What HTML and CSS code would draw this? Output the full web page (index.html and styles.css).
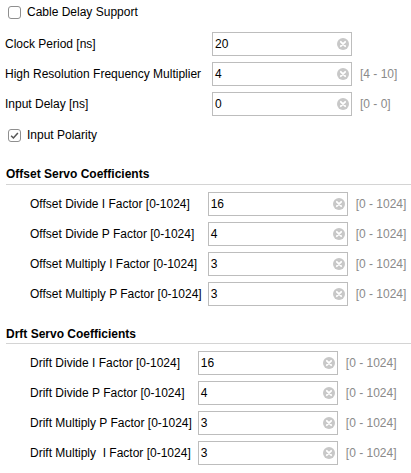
FILE: index.html
```html
<!DOCTYPE html>
<html>
<head>
<meta charset="utf-8">
<link rel="stylesheet" href="styles.css">
</head>
<body>
<div class="page">
  <label class="check check-top"><span class="box"></span><span>Cable Delay Support</span></label>

  <div class="grid grid-main">
    <span class="lbl">Clock Period [ns]</span>
    <span class="field"><span class="val">20</span><span class="clear"><svg viewBox="0 0 12 12" width="12" height="12"><circle cx="6" cy="6" r="6" fill="#c8c8c8"/><path d="M3.8 3.8 L8.2 8.2 M8.2 3.8 L3.8 8.2" stroke="#fff" stroke-width="1.8" stroke-linecap="round"/></svg></span></span>
    <span class="range"></span>

    <span class="lbl">High Resolution Frequency Multiplier</span>
    <span class="field"><span class="val">4</span><span class="clear"><svg viewBox="0 0 12 12" width="12" height="12"><circle cx="6" cy="6" r="6" fill="#c8c8c8"/><path d="M3.8 3.8 L8.2 8.2 M8.2 3.8 L3.8 8.2" stroke="#fff" stroke-width="1.8" stroke-linecap="round"/></svg></span></span>
    <span class="range">[4 - 10]</span>

    <span class="lbl">Input Delay [ns]</span>
    <span class="field"><span class="val">0</span><span class="clear"><svg viewBox="0 0 12 12" width="12" height="12"><circle cx="6" cy="6" r="6" fill="#c8c8c8"/><path d="M3.8 3.8 L8.2 8.2 M8.2 3.8 L3.8 8.2" stroke="#fff" stroke-width="1.8" stroke-linecap="round"/></svg></span></span>
    <span class="range">[0 - 0]</span>
  </div>

  <label class="check check-pol"><span class="box checked"><svg viewBox="0 0 13 13" width="11" height="11"><path d="M2.5 6.8 L5.2 9.4 L10.5 3.5" fill="none" stroke="#555" stroke-width="1.8"/></svg></span><span>Input Polarity</span></label>

  <h3 class="section-title first">Offset Servo Coefficients</h3>
  <div class="grid grid-sub">
    <span class="lbl">Offset Divide I Factor [0-1024]</span>
    <span class="field"><span class="val">16</span><span class="clear"><svg viewBox="0 0 12 12" width="12" height="12"><circle cx="6" cy="6" r="6" fill="#c8c8c8"/><path d="M3.8 3.8 L8.2 8.2 M8.2 3.8 L3.8 8.2" stroke="#fff" stroke-width="1.8" stroke-linecap="round"/></svg></span></span>
    <span class="range">[0 - 1024]</span>

    <span class="lbl">Offset Divide P Factor [0-1024]</span>
    <span class="field"><span class="val">4</span><span class="clear"><svg viewBox="0 0 12 12" width="12" height="12"><circle cx="6" cy="6" r="6" fill="#c8c8c8"/><path d="M3.8 3.8 L8.2 8.2 M8.2 3.8 L3.8 8.2" stroke="#fff" stroke-width="1.8" stroke-linecap="round"/></svg></span></span>
    <span class="range">[0 - 1024]</span>

    <span class="lbl">Offset Multiply I Factor [0-1024]</span>
    <span class="field"><span class="val">3</span><span class="clear"><svg viewBox="0 0 12 12" width="12" height="12"><circle cx="6" cy="6" r="6" fill="#c8c8c8"/><path d="M3.8 3.8 L8.2 8.2 M8.2 3.8 L3.8 8.2" stroke="#fff" stroke-width="1.8" stroke-linecap="round"/></svg></span></span>
    <span class="range">[0 - 1024]</span>

    <span class="lbl">Offset Multiply P Factor [0-1024]</span>
    <span class="field"><span class="val">3</span><span class="clear"><svg viewBox="0 0 12 12" width="12" height="12"><circle cx="6" cy="6" r="6" fill="#c8c8c8"/><path d="M3.8 3.8 L8.2 8.2 M8.2 3.8 L3.8 8.2" stroke="#fff" stroke-width="1.8" stroke-linecap="round"/></svg></span></span>
    <span class="range">[0 - 1024]</span>
  </div>

  <h3 class="section-title second">Drft Servo Coefficients</h3>
  <div class="grid grid-sub">
    <span class="lbl">Drift Divide I Factor [0-1024]</span>
    <span class="field"><span class="val">16</span><span class="clear"><svg viewBox="0 0 12 12" width="12" height="12"><circle cx="6" cy="6" r="6" fill="#c8c8c8"/><path d="M3.8 3.8 L8.2 8.2 M8.2 3.8 L3.8 8.2" stroke="#fff" stroke-width="1.8" stroke-linecap="round"/></svg></span></span>
    <span class="range">[0 - 1024]</span>

    <span class="lbl">Drift Divide P Factor [0-1024]</span>
    <span class="field"><span class="val">4</span><span class="clear"><svg viewBox="0 0 12 12" width="12" height="12"><circle cx="6" cy="6" r="6" fill="#c8c8c8"/><path d="M3.8 3.8 L8.2 8.2 M8.2 3.8 L3.8 8.2" stroke="#fff" stroke-width="1.8" stroke-linecap="round"/></svg></span></span>
    <span class="range">[0 - 1024]</span>

    <span class="lbl">Drift Multiply P Factor [0-1024]</span>
    <span class="field"><span class="val">3</span><span class="clear"><svg viewBox="0 0 12 12" width="12" height="12"><circle cx="6" cy="6" r="6" fill="#c8c8c8"/><path d="M3.8 3.8 L8.2 8.2 M8.2 3.8 L3.8 8.2" stroke="#fff" stroke-width="1.8" stroke-linecap="round"/></svg></span></span>
    <span class="range">[0 - 1024]</span>

    <span class="lbl">Drift Multiply &nbsp;I Factor [0-1024]</span>
    <span class="field"><span class="val">3</span><span class="clear"><svg viewBox="0 0 12 12" width="12" height="12"><circle cx="6" cy="6" r="6" fill="#c8c8c8"/><path d="M3.8 3.8 L8.2 8.2 M8.2 3.8 L3.8 8.2" stroke="#fff" stroke-width="1.8" stroke-linecap="round"/></svg></span></span>
    <span class="range">[0 - 1024]</span>
  </div>
</div>
</body>
</html>
```
FILE: styles.css
```css
html, body {
  margin: 0;
  padding: 0;
  background: #fff;
}
body {
  font-family: "Liberation Sans", Arial, sans-serif;
  font-size: 12px;
  color: #000;
}
.page {
  padding: 0 0 0 5px;
}
.check {
  display: flex;
  align-items: center;
  gap: 6px;
  padding-left: 3px;
  height: 13px;
  line-height: 13px;
}
.check-top {
  padding-top: 6px;
}
.check-pol {
  margin-top: 13px;
}
.box {
  box-sizing: border-box;
  width: 13px;
  height: 13px;
  border: 1px solid #8f8f8f;
  border-radius: 3px;
  background: #fff;
  display: flex;
  align-items: center;
  justify-content: center;
}
.grid {
  display: grid;
  grid-template-columns: max-content 140px max-content;
  grid-auto-rows: 24px;
  row-gap: 6px;
  column-gap: 0;
  align-items: center;
}
.grid-main {
  grid-template-columns: minmax(207px, max-content) 140px max-content;
  margin-top: 13px;
}
.grid-sub {
  margin-top: 7px;
  padding-left: 25px;
}
.lbl {
  padding-right: 6px;
  white-space: pre;
}
.field {
  box-sizing: border-box;
  height: 24px;
  border: 1px solid #bdbdbd;
  display: flex;
  align-items: center;
  justify-content: space-between;
  padding: 0 2px 0 2px;
  background: #fff;
}
.clear {
  display: flex;
  width: 12px;
  height: 12px;
}
.range {
  padding-left: 8px;
  color: #8a8a8a;
}
.section-title {
  margin: 0;
  margin-left: 1px;
  font-size: 12px;
  font-weight: bold;
  line-height: 14px;
  border-bottom: 1px solid #d4d4d4;
}
.section-title.first {
  margin-top: 25px;
  padding-bottom: 3px;
}
.section-title.second {
  margin-top: 21px;
  padding-bottom: 2px;
}
```
